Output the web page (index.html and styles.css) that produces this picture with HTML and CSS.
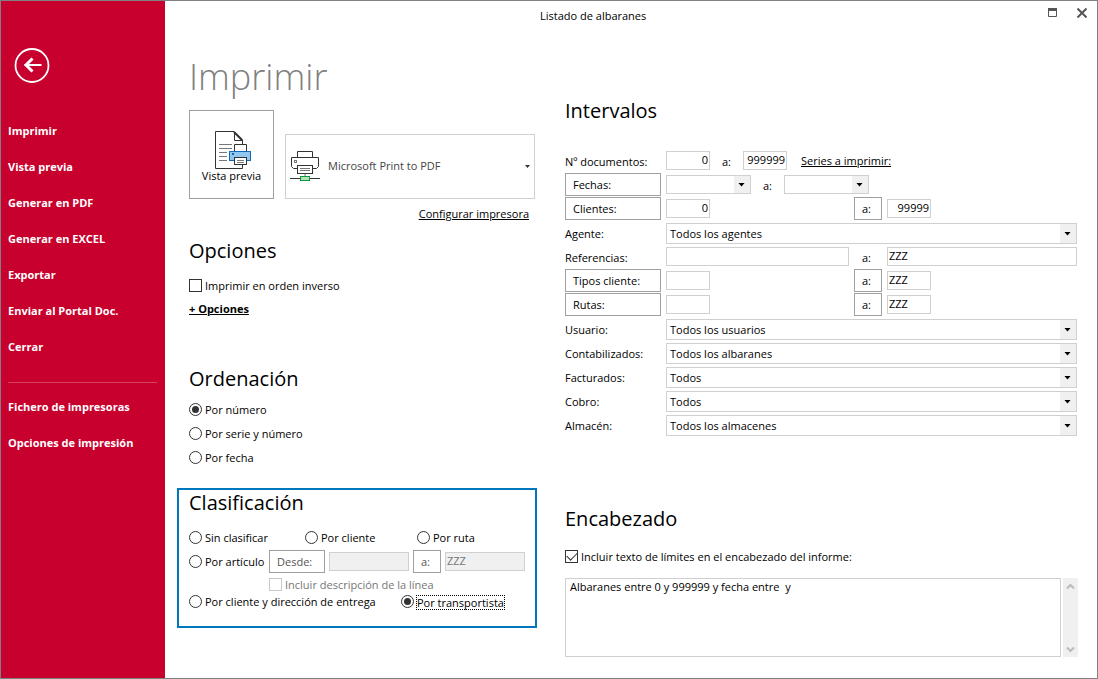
FILE: index.html
```
<!DOCTYPE html>
<html lang="es">
<head>
<meta charset="utf-8">
<title>Listado de albaranes</title>
<link rel="stylesheet" href="styles.css">
</head>
<body>
<div class="window">
  <aside class="sidebar">
    <button class="back" type="button" aria-label="Volver">
      <svg width="36" height="36" viewBox="0 0 36 36" fill="none" stroke="#fff"><circle cx="18" cy="17.500" r="16.500" stroke-width="1.800"/><path d="M10.500 17H27.500" stroke-width="2"/><path d="M18.500 10.500L12 17L18.500 23.500" stroke-width="3"/></svg>
    </button>
    <nav class="menu">
      <a href="#">Imprimir</a>
      <a href="#">Vista previa</a>
      <a href="#">Generar en PDF</a>
      <a href="#">Generar en EXCEL</a>
      <a href="#">Exportar</a>
      <a href="#">Enviar al Portal Doc.</a>
      <a href="#">Cerrar</a>
      <hr>
      <a href="#">Fichero de impresoras</a>
      <a href="#">Opciones de impresión</a>
    </nav>
  </aside>

  <main class="main">
    <div class="left">
      <div class="section">
        <h1>Imprimir</h1>
        <div class="print-row">
          <button class="preview" type="button">
            <svg width="38" height="39" viewBox="0 0 38 39" fill="none" stroke="#333">
              <path d="M27.500 13V9L19 .5H.5V37.500H27.500V34" fill="#fff"/><path d="M19.500 1V9.500H27.500"/><path d="M19 1L27 9" stroke-width="2"/>
              <path d="M4 13.500H17M4 17.500H17M4 21.500H12M4 25.500H12M4 29.500H12" stroke="#777"/>
              <path d="M19.500 20V13.500H31.500V20" fill="#fff"/>
              <rect x="14.500" y="20.500" width="21" height="9" fill="#91c8f0" stroke="#1468b4"/>
              <path d="M17 23H19" stroke="#1468b4" stroke-width="2"/>
              <rect x="19.500" y="26.500" width="12" height="7" fill="#fff"/><path d="M22 29.500H29M22 31.500H29" stroke="#777"/>
            </svg>
            <span>Vista previa</span>
          </button>
          <div class="printer">
            <select aria-label="Impresora"><option>Microsoft Print to PDF</option></select>
            <svg width="30" height="31" viewBox="0 0 30 31" fill="none" stroke="#333">
              <path d="M7.500 6V.5H22.500V6"/><path d="M7 17.500H3.500L1.500 15.500V6.500H28.500V15.500L26.500 17.500H23"/>
              <rect x="4.500" y="9.500" width="2" height="2" stroke="#777"/>
              <rect x="7.500" y="14.500" width="15" height="8"/><path d="M10 17.500H20M10 19.500H20" stroke="#777"/>
              <path d="M15 23V25" stroke="#bbb" stroke-width="2"/><path d="M0 27.500H10M20 27.500H30"/>
              <rect x="10.500" y="25.500" width="9" height="4" fill="#b5e0bd" stroke="#0c9a3c"/>
            </svg>
          </div>
        </div>
        <a class="configure" href="#">Configurar impresora</a>
      </div>

      <section class="section options">
        <h2>Opciones</h2>
        <label class="choice"><input type="checkbox">Imprimir en orden inverso</label>
        <a class="more" href="#">+ Opciones</a>
      </section>

      <section class="section order">
        <h2>Ordenación</h2>
        <div class="choices">
          <label class="choice"><input type="radio" name="orden" checked>Por número</label>
          <label class="choice"><input type="radio" name="orden">Por serie y número</label>
          <label class="choice"><input type="radio" name="orden">Por fecha</label>
        </div>
      </section>

      <section class="section classify">
        <h2>Clasificación</h2>
        <div class="thirds">
          <label class="choice"><input type="radio" name="clase">Sin clasificar</label>
          <label class="choice"><input type="radio" name="clase">Por cliente</label>
          <label class="choice"><input type="radio" name="clase">Por ruta</label>
        </div>
        <div class="article">
          <label class="choice"><input type="radio" name="clase">Por artículo</label>
          <button class="pick" type="button" disabled>Desde:</button>
          <input class="box" type="text" aria-label="Desde artículo" disabled>
          <button class="pick" type="button" disabled>a:</button>
          <input class="box" type="text" aria-label="Hasta artículo" value="ZZZ" disabled>
        </div>
        <label class="choice describe"><input type="checkbox" disabled>Incluir descripción de la línea</label>
        <div class="last">
          <label class="choice"><input type="radio" name="clase">Por cliente y dirección de entrega</label>
          <label class="choice"><input type="radio" name="clase" checked><span class="focused">Por transportista</span></label>
        </div>
      </section>
    </div>

    <div class="right">
      <section>
        <h2>Intervalos</h2>
        <div class="ranges">
          <label for="doc">Nº documentos:</label>
          <div class="fields wide">
            <input class="box short num" id="doc" type="text" value="0">
            <label class="to" for="doc2">a:</label>
            <input class="box short num" id="doc2" type="text" value="999999">
            <a class="series" href="#">Series a imprimir:</a>
          </div>

          <button class="pick" type="button">Fechas:</button>
          <div class="fields wide dates">
            <span class="combo"><select aria-label="Fecha desde"><option></option></select></span>
            <label class="to" for="date2">a:</label>
            <span class="combo"><select id="date2"><option></option></select></span>
          </div>

          <button class="pick" type="button">Clientes:</button>
          <input class="box short num" type="text" value="0" aria-label="Cliente desde">
          <button class="pick" type="button">a:</button>
          <input class="box short num" type="text" value="99999" aria-label="Cliente hasta">

          <label for="agent">Agente:</label>
          <span class="combo wide"><select id="agent"><option>Todos los agentes</option></select></span>

          <label for="ref">Referencias:</label>
          <input class="box" id="ref" type="text">
          <label class="mid" for="ref2">a:</label>
          <input class="box" id="ref2" type="text" value="ZZZ">

          <button class="pick" type="button">Tipos cliente:</button>
          <input class="box short" type="text" aria-label="Tipo desde">
          <button class="pick" type="button">a:</button>
          <input class="box short" type="text" value="ZZZ" aria-label="Tipo hasta">

          <button class="pick" type="button">Rutas:</button>
          <input class="box short" type="text" aria-label="Ruta desde">
          <button class="pick" type="button">a:</button>
          <input class="box short" type="text" value="ZZZ" aria-label="Ruta hasta">

          <label for="user">Usuario:</label>
          <span class="combo wide"><select id="user"><option>Todos los usuarios</option></select></span>
          <label for="posted">Contabilizados:</label>
          <span class="combo wide"><select id="posted"><option>Todos los albaranes</option></select></span>
          <label for="billed">Facturados:</label>
          <span class="combo wide"><select id="billed"><option>Todos</option></select></span>
          <label for="paid">Cobro:</label>
          <span class="combo wide"><select id="paid"><option>Todos</option></select></span>
          <label for="store">Almacén:</label>
          <span class="combo wide"><select id="store"><option>Todos los almacenes</option></select></span>
        </div>
      </section>

      <section class="heading">
        <h2>Encabezado</h2>
        <label class="choice"><input type="checkbox" checked>Incluir texto de límites en el encabezado del informe:</label>
        <div class="memo">
          <textarea aria-label="Texto del encabezado">Albaranes entre 0 y 999999 y fecha entre  y</textarea>
          <div class="scroll">
            <svg width="9" height="7" viewBox="0 0 9 7" fill="none" stroke="#bbb" stroke-width="2"><path d="M1 5.500L4.500 2L8 5.500"/></svg>
            <svg width="9" height="7" viewBox="0 0 9 7" fill="none" stroke="#bbb" stroke-width="2"><path d="M1 1.500L4.500 5L8 1.500"/></svg>
          </div>
        </div>
      </section>
    </div>
  </main>

  <header class="titlebar">
    <span>Listado de albaranes</span>
    <div class="controls">
      <button type="button" aria-label="Maximizar"><svg width="9" height="9" viewBox="0 0 9 9" fill="none" stroke="#555"><path d="M.5 0V8.500H8.500V0"/><path d="M0 1.500H9" stroke-width="3"/></svg></button>
      <button type="button" aria-label="Cerrar ventana"><svg width="10" height="10" viewBox="0 0 10 10" fill="none" stroke="#555" stroke-width="2"><path d="M.5 .5L9.500 9.500M9.500 .5L.5 9.500"/></svg></button>
    </div>
  </header>
</div>
</body>
</html>
```
FILE: styles.css
```
* { box-sizing: border-box; }

body {
  margin: 0;
  background: #fff;
  color: #000;
  font: 11px/16px "Open Sans", "Noto Sans", sans-serif;
}

button, input, select, textarea { font: inherit; color: inherit; margin: 0; }
button { background: none; border: 0; padding: 0; }
a { color: inherit; }
svg { display: block; flex: none; }

.window {
  display: grid;
  grid-template: 30px 1fr / 164px minmax(0, 1fr);
  grid-template-areas: "side title" "side main";
  min-height: 100vh;
  border: 1px solid #808080;
}

/* Sidebar */
.sidebar { grid-area: side; background: #c8002d; color: #fff; padding: 47px 8px 0 7px; }
.back { display: block; margin-left: 6px; }
.menu { display: flex; flex-direction: column; margin-top: 29px; }
.menu a { line-height: 36px; font-weight: 700; text-decoration: none; }
.menu hr { width: 100%; margin: 17px 0 6px; border: 0; border-top: 1px solid #d64060; }

/* Title bar */
.titlebar {
  grid-area: title;
  display: grid;
  grid-template-columns: 1fr auto;
  align-items: center;
  padding-right: 10px;
}
.titlebar span { padding-left: 375px; }
.controls { display: flex; align-items: center; gap: 20px; padding-bottom: 7px; }

/* Main area */
.main {
  grid-area: main;
  display: grid;
  grid-template-columns: 360px minmax(0, 1fr);
  column-gap: 28px;
  align-items: start;
  padding: 22px 20px 16px 12px;
}
.section { display: flex; flex-direction: column; align-items: flex-start; padding: 0 12px; }
h1, h2 { margin: 0; font-weight: 400; }
h1 { font-size: 36px; line-height: 48px; font-weight: 300; color: #808080; }
h2 { font-size: 20px; line-height: 28px; }

.print-row {
  display: flex;
  align-items: flex-end;
  gap: 11px;
  align-self: stretch;
  margin: 9px -10px 0 0;
}
.preview {
  display: flex;
  flex-direction: column;
  align-items: center;
  justify-content: center;
  width: 85px;
  height: 89px;
  padding-top: 3px;
  border: 1px solid #a0a0a0;
}
.preview svg { margin-left: 4px; }
.preview span { line-height: 12px; }
.printer { display: grid; flex: 1; height: 65px; align-items: center; }
.printer > *, .printer::after { grid-area: 1 / 1; }
.printer svg { margin-left: 5px; pointer-events: none; }
.printer select {
  appearance: none;
  width: 100%;
  height: 100%;
  padding: 0 20px 2px 42px;
  border: 1px solid #d0d0d0;
  border-radius: 0;
  background: #fff;
  color: #444;
}
.printer::after, .combo::after {
  content: "";
  justify-self: end;
  width: 7px;
  height: 4px;
  margin-right: 5px;
  background: #000;
  clip-path: polygon(0 0, 100% 0, 50% 100%);
  pointer-events: none;
}
.printer::after { width: 5px; height: 3px; background: #333; }
.configure { align-self: flex-end; margin: 7px -4px 0 0; }

.options { margin-top: 15px; }
.options .choice { margin-top: 12px; }
.more { margin-top: 6px; font-weight: 700; }
.order { margin-top: 48px; }
.choices { display: grid; gap: 6px; margin-top: 8px; }

/* Tick boxes and radios */
.choice { display: flex; align-items: center; gap: 3px; line-height: 18px; white-space: nowrap; }
.choice input {
  appearance: none;
  display: grid;
  place-content: center;
  flex: none;
  width: 13px;
  height: 13px;
  margin-bottom: 1px;
  border: 1px solid #333;
  background: #fff;
}
.choice input[type="radio"] { border-radius: 50%; }
.choice input[type="radio"]:checked::before {
  content: "";
  width: 7px;
  height: 7px;
  border-radius: 50%;
  background: #333;
}
.choice input[type="checkbox"]:checked::before {
  content: "";
  width: 9px;
  height: 5px;
  margin-bottom: 3px;
  border: solid #333;
  border-width: 0 0 1px 1px;
  transform: rotate(-45deg);
}
.choice input:disabled { border-color: #c8c8c8; }

/* Text boxes and buttons */
.box {
  width: 100%;
  height: 19px;
  min-width: 0;
  padding: 0 1px 2px;
  border: 1px solid #d0d0d0;
  border-radius: 0;
  background: #fff;
}
.box:disabled { background: #f0f0f0; color: #777; }
.short { width: 44px; }
.num { text-align: right; }
.pick { height: 23px; padding: 0 7px; border: 1px solid #a0a0a0; text-align: left; }
.pick:disabled { color: #555; }

/* Highlighted group */
.classify { margin-top: 21px; padding: 0 10px 16px; border: 2px solid #0078bd; }
.classify h2 { line-height: 26px; }
.thirds { display: grid; grid-template-columns: 116px 112px auto; margin-top: 13px; }
.article {
  display: grid;
  grid-template-columns: 76px 56px 80px 28px 80px;
  column-gap: 4px;
  align-items: center;
  align-self: stretch;
  margin-top: 3px;
}
.describe { margin: 4px 0 0 80px; color: #777; line-height: 16px; }
.last { display: grid; grid-template-columns: 212px auto; margin-top: 1px; }
.last .choice { line-height: 16px; }
.focused { outline: 1px dotted #000; line-height: 13px; }

/* Ranges */
.right { padding-top: 44px; }
.ranges {
  display: grid;
  grid-template-columns: 96px minmax(0, 183fr) 28px minmax(0, 190fr);
  grid-auto-rows: 23px;
  gap: 1px 5px;
  align-items: center;
  margin-top: 24px;
}
.ranges > label { padding-top: 2px; }
.wide { grid-column: 2 / -1; }
.mid { padding-left: 8px; }
.fields { display: flex; align-items: center; }
.to { margin: 0 12px; padding-top: 2px; }
.fields .short { flex: none; }
.series { margin-left: 14px; }
.combo { display: grid; height: 21px; align-items: center; }
.combo.wide { align-self: end; }
.combo::after { margin-right: 6px; }
.dates .combo { width: 85px; height: 19px; }
.combo > *, .combo::after { grid-area: 1 / 1; }
.combo select {
  appearance: none;
  width: 100%;
  height: 100%;
  padding: 0 18px 0 3px;
  border: 1px solid #d0d0d0;
  border-radius: 0;
  background: linear-gradient(#f0f0f0, #f0f0f0) right / 16px 100% no-repeat #fff;
}

/* Report heading */
.heading { margin-top: 69px; }
.heading .choice { margin-top: 15px; }
.memo { display: flex; gap: 2px; margin: 12px -1px 0 0; }
.memo textarea {
  flex: 1;
  min-width: 0;
  height: 79px;
  padding: 0 4px;
  border: 1px solid #d0d0d0;
  overflow: hidden;
  resize: none;
}
.scroll {
  display: flex;
  flex-direction: column;
  align-items: center;
  justify-content: space-between;
  width: 15px;
  padding: 5px 0 4px;
  background: #f0f0f0;
}
```
